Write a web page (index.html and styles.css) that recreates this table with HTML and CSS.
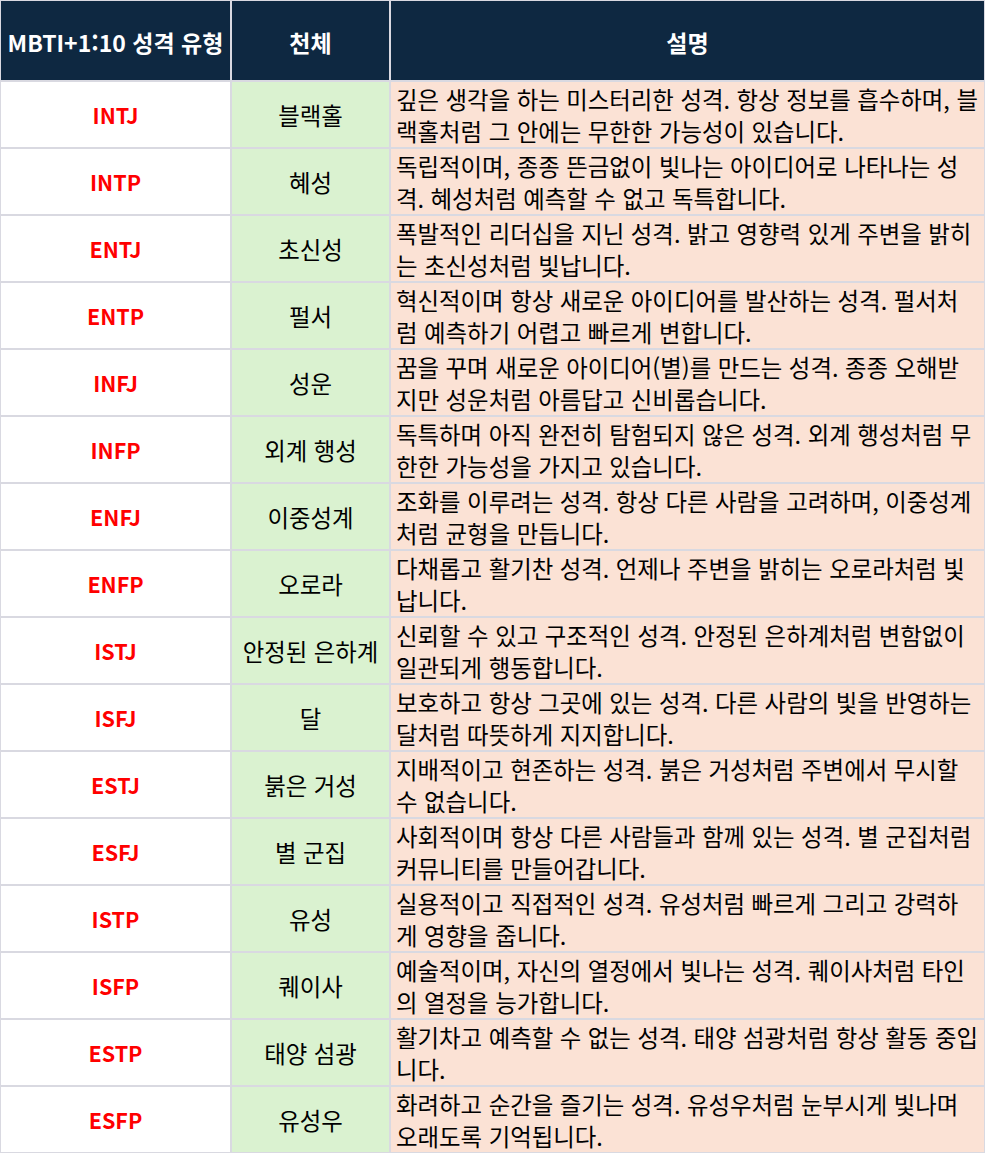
FILE: index.html
```html
<!DOCTYPE html>
<html lang="ko">
<head>
<meta charset="utf-8">
<title>MBTI 성격 유형</title>
<link rel="stylesheet" href="styles.css">
</head>
<body>
<div class="table">
  <div class="cell head">MBTI+1:10 성격 유형</div>
  <div class="cell head">천체</div>
  <div class="cell head">설명</div>

  <div class="cell type">INTJ</div><div class="cell body">블랙홀</div><div class="cell desc">깊은 생각을 하는 미스터리한 성격. 항상 정보를 흡수하며, 블<br>랙홀처럼 그 안에는 무한한 가능성이 있습니다.</div>
  <div class="cell type">INTP</div><div class="cell body">혜성</div><div class="cell desc">독립적이며, 종종 뜬금없이 빛나는 아이디어로 나타나는 성<br>격. 혜성처럼 예측할 수 없고 독특합니다.</div>
  <div class="cell type">ENTJ</div><div class="cell body">초신성</div><div class="cell desc">폭발적인 리더십을 지닌 성격. 밝고 영향력 있게 주변을 밝히<br>는 초신성처럼 빛납니다.</div>
  <div class="cell type">ENTP</div><div class="cell body">펄서</div><div class="cell desc">혁신적이며 항상 새로운 아이디어를 발산하는 성격. 펄서처<br>럼 예측하기 어렵고 빠르게 변합니다.</div>
  <div class="cell type">INFJ</div><div class="cell body">성운</div><div class="cell desc">꿈을 꾸며 새로운 아이디어(별)를 만드는 성격. 종종 오해받<br>지만 성운처럼 아름답고 신비롭습니다.</div>
  <div class="cell type">INFP</div><div class="cell body">외계 행성</div><div class="cell desc">독특하며 아직 완전히 탐험되지 않은 성격. 외계 행성처럼 무<br>한한 가능성을 가지고 있습니다.</div>
  <div class="cell type">ENFJ</div><div class="cell body">이중성계</div><div class="cell desc">조화를 이루려는 성격. 항상 다른 사람을 고려하며, 이중성계<br>처럼 균형을 만듭니다.</div>
  <div class="cell type">ENFP</div><div class="cell body">오로라</div><div class="cell desc">다채롭고 활기찬 성격. 언제나 주변을 밝히는 오로라처럼 빛<br>납니다.</div>
  <div class="cell type">ISTJ</div><div class="cell body">안정된 은하계</div><div class="cell desc">신뢰할 수 있고 구조적인 성격. 안정된 은하계처럼 변함없이<br>일관되게 행동합니다.</div>
  <div class="cell type">ISFJ</div><div class="cell body">달</div><div class="cell desc">보호하고 항상 그곳에 있는 성격. 다른 사람의 빛을 반영하는<br>달처럼 따뜻하게 지지합니다.</div>
  <div class="cell type">ESTJ</div><div class="cell body">붉은 거성</div><div class="cell desc">지배적이고 현존하는 성격. 붉은 거성처럼 주변에서 무시할<br>수 없습니다.</div>
  <div class="cell type">ESFJ</div><div class="cell body">별 군집</div><div class="cell desc">사회적이며 항상 다른 사람들과 함께 있는 성격. 별 군집처럼<br>커뮤니티를 만들어갑니다.</div>
  <div class="cell type">ISTP</div><div class="cell body">유성</div><div class="cell desc">실용적이고 직접적인 성격. 유성처럼 빠르게 그리고 강력하<br>게 영향을 줍니다.</div>
  <div class="cell type">ISFP</div><div class="cell body">퀘이사</div><div class="cell desc">예술적이며, 자신의 열정에서 빛나는 성격. 퀘이사처럼 타인<br>의 열정을 능가합니다.</div>
  <div class="cell type">ESTP</div><div class="cell body">태양 섬광</div><div class="cell desc">활기차고 예측할 수 없는 성격. 태양 섬광처럼 항상 활동 중입<br>니다.</div>
  <div class="cell type">ESFP</div><div class="cell body">유성우</div><div class="cell desc">화려하고 순간을 즐기는 성격. 유성우처럼 눈부시게 빛나며<br>오래도록 기억됩니다.</div>
</div>
</body>
</html>
```

FILE: styles.css
```css
html, body {
  margin: 0;
  padding: 0;
  background: #ffffff;
}

.table {
  width: 985px;
  box-sizing: border-box;
  display: grid;
  grid-template-columns: 229px 157px 593px;
  grid-template-rows: 79px repeat(16, 65px);
  gap: 2px;
  padding: 1px;
  background: #d9d9e1;
  font-family: "Noto Sans CJK KR", "Noto Sans", sans-serif;
  font-size: 23.4px;
  color: #000000;
}

.cell {
  white-space: nowrap;
  box-sizing: border-box;
}

.head {
  background: #0e2841;
  color: #ffffff;
  font-weight: bold;
  font-size: 23px;
  display: flex;
  align-items: center;
  justify-content: center;
  padding-top: 2px;
}

.type {
  background: #ffffff;
  color: #ff0000;
  font-weight: bold;
  font-size: 21.5px;
  display: flex;
  align-items: center;
  justify-content: center;
}

.body {
  background: #daf2d0;
  display: flex;
  align-items: center;
  justify-content: center;
}

.desc {
  background: #fbe2d5;
  padding: 2px 0 0 5px;
  line-height: 31.5px;
}
```
